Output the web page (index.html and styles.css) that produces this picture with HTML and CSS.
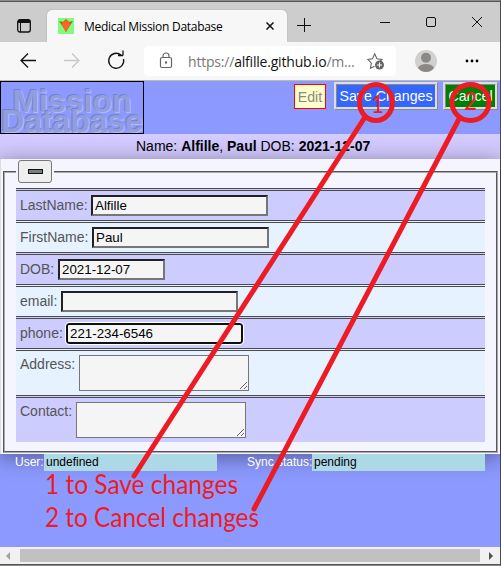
FILE: index.html
```html
<!DOCTYPE html>
<html lang="en">
<head>
<meta charset="utf-8">
<title>Medical Mission Database</title>
<link rel="stylesheet" href="styles.css">
</head>
<body>
<div class="window">
  <div class="tabbar">
    <svg class="workspace" width="16" height="16" viewBox="0 0 16 16"><rect x="1.700" y="1.700" width="12.600" height="12.300" rx="2.200" fill="none" stroke="#111" stroke-width="1.300"/><path d="M2.500 2.500h11v2h-11zM4.500 5v9" fill="#111" stroke="#111"/></svg>
    <div class="tab">
      <svg width="16" height="16" viewBox="0 0 16 16"><path d="M0 0h16v16H0z" fill="#80fb7e"/><path d="M1 3l4 1 3-3 3 3 4-1-4 6-3 5-3-5z" fill="#a36620"/><path d="M5 3l1.500 1L8 1l1.500 3L11 3l1 4-4 7-4-7z" fill="#ff641e"/></svg>
      <span class="tab-title">Medical Mission Database</span>
      <svg class="tab-close" width="8" height="8" viewBox="0 0 8 8"><path d="M.5.5l7 7m0-7l-7 7" stroke="#111" stroke-width="1.500"/></svg>
    </div>
    <svg class="controls" width="213" height="38" viewBox="0 0 213 38" fill="none" stroke="#111"><path d="M10 23.500h14M17.500 16v14M93 20.500h10M185 15l10 10m0-10l-10 10"/><rect x="139.500" y="15.500" width="9" height="9" rx="1.500"/></svg>
  </div>
  <div class="toolbar">
    <svg class="nav" width="144" height="38" viewBox="0 0 144 38" fill="none" stroke-width="1.300"><path d="M36 18.500H21m7-7l-7 7 7 7" stroke="#111"/><path d="M64 18.500h15m-7-7l7 7-7 7" stroke="#c7c7c7"/><path d="M123.500 17a7.500 7.500 0 1 1-2.500-4m2 .5h-5m5 0v-5" stroke="#111"/></svg>
    <div class="address">
      <svg width="14" height="18" viewBox="0 0 14 18" fill="none" stroke="#666" stroke-width="1.200"><rect x="1.500" y="5.500" width="11" height="10" rx="1.500"/><path d="M4 5.500V4a3 3 0 0 1 6 0v1.500"/><circle cx="7" cy="10.500" r=".6" fill="#555"/></svg>
      <span class="url">https://<b>alfille.github.io</b>/m...</span>
      <svg class="star" width="18" height="18" viewBox="0 0 18 18"><path d="M7.500 14.200l-4 2 .8-5L1 7.500l4.500-.7 2.200-5 2.200 5 5 .7-2 2" fill="none" stroke="#666" stroke-width="1.100"/><circle cx="12.500" cy="13" r="4.500" fill="#666"/><path d="M10 13h5m-2.500-2.500v5" stroke="#fff"/></svg>
    </div>
    <svg class="profile" width="24" height="24" viewBox="0 0 24 24"><circle cx="12" cy="12" r="11" fill="#d2d0ce"/><circle cx="12" cy="8.800" r="5" fill="#8b8886"/><path d="M4 19q2-4 8-4t8 4q-3 4-8 4t-8-4" fill="#8b8886"/></svg>
    <svg class="more" width="14" height="4" viewBox="0 0 14 4"><circle cx="2" cy="2" r="1.400"/><circle cx="7" cy="2" r="1.400"/><circle cx="12" cy="2" r="1.400"/></svg>
  </div>
  <main class="page">
    <header class="header">
      <div class="logo"><span class="logo-top">Mission</span><span class="logo-bottom">Database</span></div>
      <div class="actions">
        <button class="edit">Edit</button>
        <button class="save">Save Changes</button>
        <button class="cancel">Cancel</button>
      </div>
    </header>
    <div class="patient"><span>Name: <b>Alfille</b>, <b>Paul</b> DOB: <b>2021-12-07</b></span></div>
    <section class="panel">
      <fieldset class="record">
        <legend><button class="collapse"><i></i></button></legend>
        <div class="row"><label class="l-last">LastName:</label><input value="Alfille"></div>
        <div class="row"><label class="l-first">FirstName:</label><input value="Paul"></div>
        <div class="row"><label class="l-dob">DOB:</label><input class="date" value="2021-12-07"></div>
        <div class="row"><label class="l-email">email:</label><input></div>
        <div class="row"><label class="l-phone">phone:</label><input class="focused" value="221-234-6546"></div>
        <div class="row tall"><label class="l-address">Address:</label><textarea></textarea></div>
        <div class="row tall"><label class="l-contact">Contact:</label><textarea></textarea></div>
      </fieldset>
    </section>
    <footer class="status">
      <span class="key user">User:</span><span class="value">undefined</span>
      <span class="key sync">Sync status:</span><span class="value">pending</span>
    </footer>
  </main>
  <div class="scrollbar"><i class="arrow left"></i><i class="thumb"></i><i class="arrow right"></i></div>
</div>
<svg class="notes" width="501" height="566" viewBox="0 0 501 566">
  <g fill="none" stroke="#ed1c24" stroke-width="5" stroke-linecap="round">
    <ellipse cx="376" cy="102.500" rx="16.500" ry="18"/><path d="M365 117L134 476"/>
    <ellipse cx="470.500" cy="102.500" rx="18.500" ry="18"/><path d="M459 119L254 509"/>
  </g>
  <g fill="#ed1c24">
    <text x="45" y="494" textLength="193" lengthAdjust="spacingAndGlyphs">1 to Save changes</text>
    <text x="45" y="527" textLength="214" lengthAdjust="spacingAndGlyphs">2 to Cancel changes</text>
    <text x="371" y="113" textLength="13" lengthAdjust="spacingAndGlyphs" class="number">1</text>
    <text x="464" y="110" textLength="13" lengthAdjust="spacingAndGlyphs" class="number">2</text>
  </g>
</svg>
</body>
</html>
```
FILE: styles.css
```css
* { box-sizing: border-box; }
body {
  margin: 0;
  width: 501px;
  height: 566px;
  overflow: hidden;
  background: #555;
  font-family: "Liberation Sans", Arial, sans-serif;
}
.window {
  height: 566px;
  border-top: 1px solid #8a8a90;
  border-right: 1px solid #4b4b4b;
  border-bottom: 1px solid #8b8a8f;
  display: flex;
  flex-direction: column;
}
.tabbar {
  height: 41px;
  flex: none;
  border-top: 1px solid #555;
  background: #cdcdcd;
  display: flex;
  align-items: flex-start;
}
.workspace { margin: 16px 15px 0 16px; flex: none; }
.tab {
  width: 240px;
  height: 32px;
  margin-top: 8px;
  padding-left: 11px;
  border-radius: 5px 5px 0 0;
  background: #f7f7f7;
  box-shadow: 0 0 1px #888;
  display: flex;
  align-items: center;
  flex: none;
}
.tab-title {
  margin-left: 10px;
  width: 182px;
  font: 12px "Open Sans", sans-serif;
  letter-spacing: -.28px;
  white-space: nowrap;
}
.tab-close { flex: none; }
.controls { flex: none; }
.toolbar {
  height: 38px;
  flex: none;
  background: #f7f7f7;
  display: flex;
  align-items: center;
  position: relative;
}
.nav { flex: none; }
.address {
  width: 252px;
  height: 30px;
  border-radius: 4px;
  background: #fff;
  display: flex;
  align-items: center;
  padding-left: 15px;
  flex: none;
}
.url {
  margin-left: 15px;
  width: 179px;
  font: 14px "Open Sans", sans-serif;
  letter-spacing: -.2px;
  color: #777;
  white-space: nowrap;
}
.url b { color: #111; font-weight: 400; }
.profile { margin-left: 18px; }
.more { margin-left: 27px; }
.page {
  height: 467px;
  flex: none;
  border-top: 1px solid #bababa;
  background: #8c9aff;
}
.header { height: 53px; display: flex; justify-content: space-between; }
.logo {
  width: 144px;
  height: 53px;
  border: 1px solid #000;
  font-weight: 700;
  color: #929edb;
  text-shadow: -1px -1px 0 #7383cb, 1px 1px 0 #b0baff;
  display: flex;
  flex-direction: column;
  align-items: center;
}
.logo-top { font-size: 32px; line-height: 30px; margin-top: 4px; height: 20px; }
.logo-bottom { font-size: 32px; line-height: 30px; letter-spacing: -.1px; }
.actions { display: flex; align-items: flex-start; padding: 1px 2px 0 0; }
button { font: 14.2px "Liberation Sans", Arial, sans-serif; padding: 0; white-space: nowrap; }
.edit { width: 32px; height: 25px; margin: 2px 8px 0 0; background: #ffffcb; color: #888; border: 1px solid red; }
.save { width: 104px; height: 28px; margin-right: 5px; background: #3366ff; color: #fff; border: 3px ridge #ddd; }
.cancel { width: 55px; height: 28px; background: #008000; color: #fff; border: 3px ridge #ddd; }
.patient {
  height: 25px;
  background: linear-gradient(#d4cbff, #cdc5fb);
  font-size: 14px;
  line-height: 25px;
  padding-left: 136px;
  white-space: nowrap;
}
.panel {
  height: 295px;
  border-left: 1px solid #ddd;
  background: #f5f5ff;
  padding: 1px 2px 0;
  box-shadow: 0 4px 20px #0006;
}
.record {
  margin: 0;
  padding: 5px 11px 9px;
  border: 2px groove #aaa;
  height: 293px;
  width: 495px;
}
legend { margin: 0; padding: 0 2px; height: 23px; }
.collapse {
  display: flex;
  align-items: center;
  justify-content: center;
  width: 34px;
  height: 23px;
  border: 1px solid #777;
  border-radius: 3px;
  background: #efefef;
}
.collapse i { width: 15px; height: 5px; border: 1px solid #111; background: #778080; }
.row {
  width: 469px;
  height: 32px;
  border-top: 3px double #4b4b4b;
  background: #ccccff;
  color: #555;
  padding: 4px 0 0 4px;
  display: flex;
  align-items: flex-start;
  font-size: 14px;
}
.row:nth-of-type(even) { background: #e6f2ff; }
.row label { line-height: 21px; white-space: nowrap; flex: none; }
.tall { height: 47px; }
.tall label { line-height: 19px; }
.l-last { width: 71px; }
.l-first { width: 72px; }
.l-dob { width: 38px; }
.l-email { width: 41px; }
.l-phone { width: 46px; }
.l-address { width: 59px; }
.l-contact { width: 56px; }
input {
  width: 177px;
  height: 21px;
  padding: 1px 2px;
  border: 2px inset #767676;
  background: #f5f5f5;
  font: 13.333px "Liberation Sans", Arial, sans-serif;
  color: #000;
}
.date { width: 107px; }
.focused { border: 2px solid #101010; border-radius: 3px; outline: 1px solid #fff; }
textarea { width: 170px; height: 36px; border: 1px solid #767676; background: #f5f5f5; }
.status { height: 17px; display: flex; font-size: 12px; line-height: 17px; position: relative; }
.key { color: #fff; white-space: nowrap; flex: none; }
.user { margin-left: 15px; width: 29px; }
.sync { margin-left: 30px; width: 65px; }
.value { width: 173px; flex: none; background: #add8e6; padding-left: 2px; }
.scrollbar {
  height: 17px;
  flex: none;
  background: #f1f1f1;
  display: flex;
  align-items: center;
  justify-content: space-between;
  padding: 0 7px 0 6px;
}
.thumb { width: 460px; height: 13px; background: #c1c1c1; }
.arrow { border: 4px solid transparent; width: 0; height: 0; }
.left { border-left: 0; border-right-color: #a3a3a3; }
.right { border-right: 0; border-left-color: #505050; }
.notes { position: absolute; left: 0; top: 0; pointer-events: none; font: 26px Lato, sans-serif; }
.number { font-size: 25px; }
```
